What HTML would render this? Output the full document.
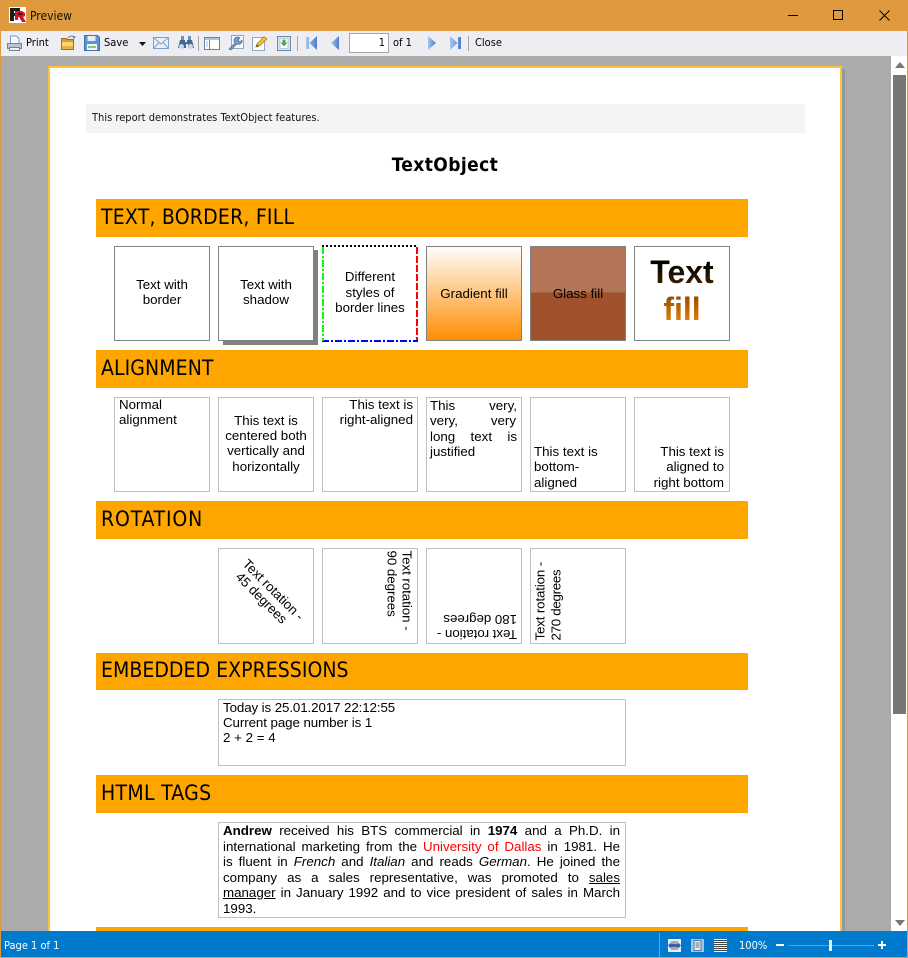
<!DOCTYPE html>
<html><head><meta charset="utf-8"><title>Preview</title>
<style>
html,body{margin:0;padding:0;background:#ababab}
body{position:relative;width:908px;height:958px;overflow:hidden;font-family:"Liberation Sans",Arial,sans-serif;font-size:13.33px;color:#000}
div,span.a,svg{position:absolute}
.ui{font-family:"DejaVu Sans",sans-serif;font-stretch:condensed;font-size:11px;white-space:pre;line-height:14px;height:14px}
.box{width:96px;height:95px;box-shadow:inset 0 0 0 1px #808080;background:#fff}
.g{width:96px;height:95px;background:#fff;box-shadow:inset 0 0 0 1px #c0c0c0}
.l{white-space:pre;height:15px;line-height:15px}
.c{width:96px;text-align:center}
.j{text-align:justify;text-align-last:justify;white-space:normal}
.h{left:96px;width:652px;background:#ffa500;font-family:"DejaVu Sans",sans-serif;font-stretch:condensed;font-size:21px;line-height:36px;padding-left:5px;box-sizing:border-box;white-space:pre}
.r{transform-origin:0 50%;letter-spacing:-.05px}
</style></head><body>
<!-- window frame -->
<div style="left:0;top:0;width:908px;height:31px;background:#de9a3c"></div>
<div style="left:0;top:0;width:1px;height:958px;background:#de9a3c"></div>
<div style="left:907px;top:0;width:1px;height:958px;background:#de9a3c"></div>
<div style="left:0;top:957px;width:908px;height:1px;background:#de9a3c"></div>
<!-- logo -->
<svg style="left:9px;top:7px" width="17" height="16" viewBox="0 0 17 16"><rect width="17" height="16" fill="#fff"/><path d="M1 1h10v3H5v2h5v3H5v5H1z" fill="#1a1a1a"/><path d="M6 4h7l3 2v3l-2 1 3 5h-4l-3-5H9v3H6z" fill="#d8102a"/><path d="M9 6h4v2H9z" fill="#1a1a1a"/></svg>
<div class="ui" style="left:30px;top:9px;font-size:12px;color:#111">Preview</div>
<!-- window controls -->
<svg style="left:780px;top:5px" width="120" height="20" viewBox="0 0 120 20" fill="none" stroke="#000"><path d="M8 10.500h10"/><rect x="53.500" y="5.500" width="9" height="9"/><path d="M99.500 5.500l10 10M109.500 5.500l-10 10"/></svg>
<!-- toolbar -->
<div style="left:1px;top:31px;width:906px;height:25px;background:#eeeef2"></div>
<svg style="left:6px;top:35px" width="17" height="17" viewBox="0 0 17 17"><path d="M4.500 1h6l2.500 2.500v5H4.500z" fill="#f4f8fc" stroke="#7d9bc0"/><path d="M1.500 8.500h14v5h-14z" fill="#b8c4d2" stroke="#6f859e"/><path d="M3.500 12.500h10v3h-10z" fill="#eef2f6" stroke="#6f859e"/></svg>
<div class="ui" style="left:26px;top:36px">Print</div>
<svg style="left:60px;top:35px" width="17" height="16" viewBox="0 0 17 16"><path d="M1.500 3.500h5l1 1h6v10h-12z" fill="#d99a30" stroke="#a86a1c"/><path d="M2 7h11v7H2z" fill="#f6d66e"/><path d="M2 11h11v3H2z" fill="#e8b33e"/><path d="M8 3c1-2 4-2.500 6-1" fill="none" stroke="#5f7f9f"/><path d="M13 .5l3 1.500-2.500 2z" fill="#5f7f9f"/></svg>
<svg style="left:84px;top:35px" width="16" height="16" viewBox="0 0 16 16"><path d="M.5.500h13l2 2v13H.5z" fill="#5b93d3" stroke="#3d72b4"/><path d="M3.500 1h8v5h-8z" fill="#e8eef6"/><path d="M3 9h10v6H3z" fill="#f2f5f8"/><path d="M4 11h8v2H4z" fill="#8cc87c"/></svg>
<div class="ui" style="left:104px;top:36px">Save</div>
<svg style="left:139px;top:42px" width="7" height="4"><path d="M0 0h7L3.500 4z" fill="#111"/></svg>
<svg style="left:153px;top:37px" width="16" height="12" viewBox="0 0 16 12"><path d="M.5.500h15v11H.5z" fill="#eaf0f8" stroke="#7fa0c8"/><path d="M.5.500L8 7l7.500-6.500M.5 11.500L6 5.500M15.500 11.500L10 5.500" fill="none" stroke="#7fa0c8"/></svg>
<svg style="left:178px;top:35px" width="16" height="15" viewBox="0 0 16 15"><path d="M3 1h3v4H3zM10 1h3v4h-3z" fill="#6f8fb0"/><path d="M2 5h5v2h2V5h5l2 8h-6V9H8v4H0z" fill="#46698f"/><circle cx="3.500" cy="11.500" r="2.500" fill="#c8d8e8"/><circle cx="12.500" cy="11.500" r="2.500" fill="#c8d8e8"/></svg>
<div style="left:198px;top:36px;width:1px;height:15px;background:#a6a6a6"></div>
<svg style="left:204px;top:37px" width="16" height="13" viewBox="0 0 16 13"><path d="M.5.500h15v12H.5z" fill="#fff" stroke="#5d86b8"/><path d="M1 1h14v2H1z" fill="#a9c4e4"/><path d="M5.500 3v9" stroke="#5d86b8"/><path d="M2.500 5h1M2.500 7h1M2.500 9h1" stroke="#777"/></svg>
<svg style="left:228px;top:35px" width="16" height="16" viewBox="0 0 16 16"><path d="M3.500.500h12v13h-12z" fill="#fafcff" stroke="#90a8c4"/><path d="M1 14l6-6a3.500 3.500 0 0 1 5-5l-2 2 2 2 2-2a3.500 3.500 0 0 1-5 4l-6 6z" fill="#7a9cc8" stroke="#4a6a98" stroke-width=".7"/></svg>
<svg style="left:252px;top:35px" width="16" height="16" viewBox="0 0 16 16"><path d="M.5 2.500h12v13H.5z" fill="#fafcff" stroke="#90a8c4"/><path d="M4 12l1-3 7-7.500 3 2.500-7.500 7z" fill="#f2c040" stroke="#b8801c" stroke-width=".8"/><path d="M4 12l1-3 2 2z" fill="#555"/></svg>
<svg style="left:277px;top:36px" width="14" height="15" viewBox="0 0 14 15"><path d="M.5.500h13v14H.5z" fill="#dbe6f2" stroke="#6a8aa8"/><path d="M3 2.500h8v10H3z" fill="#fff" stroke="#8fa6bd" stroke-width=".6"/><path d="M5.500 3.500h3v3h2L7 10.500 3.500 6.500h2z" fill="#54a05a"/></svg>
<div style="left:297px;top:36px;width:1px;height:15px;background:#a6a6a6"></div>
<svg style="left:306px;top:36px" width="11" height="14" viewBox="0 0 11 14"><defs><linearGradient id="b" x1="0" x2="1" y1="0" y2="0"><stop offset="0" stop-color="#a8c6ee"/><stop offset="1" stop-color="#4a7cd0"/></linearGradient></defs><path d="M0 1h3v12H0zM11 0v14L3.500 7z" fill="url(#b)"/></svg>
<svg style="left:331px;top:36px" width="8" height="14"><path d="M8 0v14L0 7z" fill="url(#b)"/></svg>
<div style="left:349px;top:33px;width:40px;height:20px;box-sizing:border-box;border:1px solid #a6a6a6;background:#fff"></div>
<div class="ui" style="left:349px;top:36px;width:36px;text-align:right">1</div>
<div class="ui" style="left:393px;top:36px">of 1</div>
<svg style="left:428px;top:36px" width="8" height="14"><path d="M0 0v14L8 7z" fill="url(#b)"/></svg>
<svg style="left:450px;top:36px" width="11" height="14" viewBox="0 0 11 14"><path d="M8 1h3v12H8zM0 0v14L7.500 7z" fill="url(#b)"/></svg>
<div style="left:468px;top:36px;width:1px;height:15px;background:#a6a6a6"></div>
<div class="ui" style="left:475px;top:36px">Close</div>
<!-- scrollbar -->
<div style="left:891px;top:56px;width:16px;height:875px;background:#fff"></div>
<div style="left:893px;top:75px;width:13px;height:639px;background:#777"></div>
<svg style="left:895px;top:62px" width="10" height="6"><path d="M5 0l5 6H0z" fill="#777"/></svg>
<svg style="left:895px;top:920px" width="10" height="6"><path d="M0 0h10L5 6z" fill="#777"/></svg>
<!-- page -->
<div style="left:842px;top:69px;width:3px;height:862px;background:#8f9a9a"></div>
<div style="left:48px;top:66px;width:794px;height:880px;box-sizing:border-box;border:2px solid #ffc23c;background:#fff"></div>
<div style="left:86px;top:104px;width:719px;height:29px;background:#f4f4f4"></div>
<div class="ui" style="left:92px;top:111px;font-size:11px;color:#111">This report demonstrates TextObject features.</div>
<div style="left:48px;top:153px;width:794px;text-align:center;font-family:'DejaVu Sans',sans-serif;font-weight:bold;font-size:19px;line-height:24px;font-stretch:condensed;letter-spacing:.4px">TextObject</div>

<div class="h" style="top:199px;height:38px;letter-spacing:.22px">TEXT, BORDER, FILL</div>
<div class="h" style="top:350px;height:38px;letter-spacing:.1px">ALIGNMENT</div>
<div class="h" style="top:501px;height:38px;letter-spacing:.85px">ROTATION</div>
<div class="h" style="top:653px;height:37px;line-height:35px;letter-spacing:.05px">EMBEDDED EXPRESSIONS</div>
<div class="h" style="top:775px;height:38px;letter-spacing:.3px">HTML TAGS</div>
<div class="h" style="top:927px;height:4px"></div>

<!-- row 1 -->
<div class="box" style="left:114px;top:246px"></div>
<div class="l c" style="left:114px;top:277px">Text with</div>
<div class="l c" style="left:114px;top:292px">border</div>
<div style="left:223px;top:250px;width:95px;height:95px;background:#808080"></div>
<div class="box" style="left:218px;top:246px"></div>
<div class="l c" style="left:218px;top:277px">Text with</div>
<div class="l c" style="left:218px;top:292px">shadow</div>
<svg style="left:322px;top:245px" width="97" height="98"><path d="M0 1H96" stroke="#000" stroke-width="2" stroke-dasharray="2 2" fill="none"/><path d="M95 2V96" stroke="#f00" stroke-width="2" stroke-dasharray="7 2" fill="none"/><path d="M0 96H96" stroke="#00f" stroke-width="2" stroke-dasharray="7 2 2 2" fill="none"/><path d="M1 2V96" stroke="#0f0" stroke-width="2" stroke-dasharray="7 2 2 2" fill="none"/></svg>
<div class="l c" style="left:322px;top:269px">Different</div>
<div class="l c" style="left:322px;top:285px">styles of</div>
<div class="l c" style="left:322px;top:300px">border lines</div>
<div class="box" style="left:426px;top:246px;background:linear-gradient(#fff,#ff8c00)"></div>
<div class="l c" style="left:426px;top:286px">Gradient fill</div>
<div class="box" style="left:530px;top:246px;background:linear-gradient(#b27557 0,#b27557 49%,#a0522d 49%,#a0522d 100%)"></div>
<div class="l c" style="left:530px;top:286px">Glass fill</div>
<div class="box" style="left:634px;top:246px"></div>
<div style="left:634px;top:254px;width:96px;height:74px;text-align:center;font-weight:bold;font-size:32px;line-height:37px;background:linear-gradient(#000 0,#000 10%,#3f2000 43%,#9a5400 60%,#ff8c00 100%);-webkit-background-clip:text;background-clip:text;color:transparent">Text<br>fill</div>

<!-- row 2 -->
<div class="g" style="left:114px;top:397px"></div>
<div class="l" style="left:119px;top:397px">Normal</div>
<div class="l" style="left:119px;top:412px">alignment</div>
<div class="g" style="left:218px;top:397px"></div>
<div class="l c" style="left:218px;top:413px">This text is</div>
<div class="l c" style="left:218px;top:428px">centered both</div>
<div class="l c" style="left:218px;top:443px">vertically and</div>
<div class="l c" style="left:218px;top:459px">horizontally</div>
<div class="g" style="left:322px;top:397px"></div>
<div class="l" style="left:322px;top:397px;width:91px;text-align:right">This text is</div>
<div class="l" style="left:322px;top:412px;width:91px;text-align:right">right-aligned</div>
<div class="g" style="left:426px;top:397px"></div>
<div class="l j" style="left:430px;top:398px;width:87px">This very,</div>
<div class="l j" style="left:430px;top:413px;width:86px">very, very</div>
<div class="l j" style="left:430px;top:429px;width:87px">long text is</div>
<div class="l" style="left:430px;top:444px">justified</div>
<div class="g" style="left:530px;top:397px"></div>
<div class="l" style="left:534px;top:444px">This text is</div>
<div class="l" style="left:534px;top:459px">bottom-</div>
<div class="l" style="left:534px;top:475px">aligned</div>
<div class="g" style="left:634px;top:397px"></div>
<div class="l" style="left:624px;top:444px;width:100px;text-align:right">This text is</div>
<div class="l" style="left:624px;top:459px;width:100px;text-align:right">aligned to</div>
<div class="l" style="left:624px;top:475px;width:100px;text-align:right">right bottom</div>

<!-- row 3 -->
<div class="g" style="left:218px;top:548px;height:96px"></div>
<div class="l r" style="left:244.500px;top:553.500px;transform:rotate(45deg)">Text rotation -</div>
<div class="l r" style="left:237.500px;top:567px;transform:rotate(45deg)">45 degrees</div>
<div class="g" style="left:322px;top:548px;height:96px"></div>
<div class="l r" style="left:407px;top:542.500px;transform:rotate(90deg)">Text rotation -</div>
<div class="l r" style="left:392px;top:542.500px;transform:rotate(90deg)">90 degrees</div>
<div class="g" style="left:426px;top:548px;height:96px"></div>
<div class="l r" style="left:517px;top:626.500px;transform:rotate(180deg)">Text rotation -</div>
<div class="l r" style="left:517px;top:611.500px;transform:rotate(180deg)">180 degrees</div>
<div class="g" style="left:530px;top:548px;height:96px"></div>
<div class="l r" style="left:540px;top:632.500px;transform:rotate(-90deg);letter-spacing:-.15px">Text rotation -</div>
<div class="l r" style="left:556px;top:632.500px;transform:rotate(-90deg);letter-spacing:-.3px">270 degrees</div>

<!-- expressions -->
<div class="g" style="left:218px;top:699px;width:408px;height:67px"></div>
<div class="l" style="left:223px;top:700px;letter-spacing:-.1px">Today is 25.01.2017 22:12:55</div>
<div class="l" style="left:223px;top:715px;letter-spacing:-.08px">Current page number is 1</div>
<div class="l" style="left:223px;top:730px">2 + 2 = 4</div>

<!-- html tags -->
<div class="g" style="left:218px;top:822px;width:408px;height:96px"></div>
<div class="l j" style="left:223px;top:823px;width:397px"><b>Andrew</b> received his BTS commercial in <b>1974</b> and a Ph.D. in</div>
<div class="l j" style="left:223px;top:839px;width:397px">international marketing from the <span style="color:#f00">University of Dallas</span> in 1981. He</div>
<div class="l j" style="left:223px;top:854px;width:397px">is fluent in <i>French</i> and <i>Italian</i> and reads <i>German</i>. He joined the</div>
<div class="l j" style="left:223px;top:870px;width:397px">company as a sales representative, was promoted to <u>sales</u></div>
<div class="l j" style="left:223px;top:885px;width:397px"><u>manager</u> in January 1992 and to vice president of sales in March</div>
<div class="l" style="left:223px;top:901px">1993.</div>

<!-- status bar -->
<div style="left:1px;top:931px;width:906px;height:26px;background:#007acc"></div>
<div class="ui" style="left:4px;top:939px;color:#fff">Page 1 of 1</div>
<div style="left:659px;top:933px;width:1px;height:24px;background:#5aa9de"></div>
<svg style="left:668px;top:939px" width="13" height="13" viewBox="0 0 13 13"><rect width="13" height="13" fill="#e6edf5"/><path d="M3 3h7M3 5h7M3 8h7M3 10h7" stroke="#667"/><path d="M0 6.500l3-3v6zM13 6.500l-3-3v6zM3 5.500h7v2H3z" fill="#2a5cc0"/></svg>
<svg style="left:691px;top:939px" width="13" height="13" viewBox="0 0 13 13"><rect width="13" height="13" fill="#a8c4e0"/><rect x="3" y="1.500" width="7" height="10" fill="#e6edf5" stroke="#5878a0"/><path d="M4.500 4h4M4.500 6h4M4.500 8h4" stroke="#5878a0"/></svg>
<svg style="left:714px;top:939px" width="13" height="13" viewBox="0 0 13 13"><rect width="13" height="13" fill="#eef2f6"/><path d="M0 1.500h13M0 3.500h13M0 5.500h13M0 7.500h13M0 9.500h13M0 11.500h13" stroke="#444"/></svg>
<div class="ui" style="left:739px;top:939px;color:#fff">100%</div>
<div style="left:776px;top:944px;width:8px;height:2px;background:#fff"></div>
<div style="left:788px;top:945px;width:86px;height:1px;background:#4fa3dc"></div>
<div style="left:829px;top:940px;width:3px;height:11px;background:#e8f2fa"></div>
<div style="left:878px;top:944px;width:8px;height:2px;background:#fff"></div>
<div style="left:881px;top:941px;width:2px;height:8px;background:#fff"></div>
</body></html>
